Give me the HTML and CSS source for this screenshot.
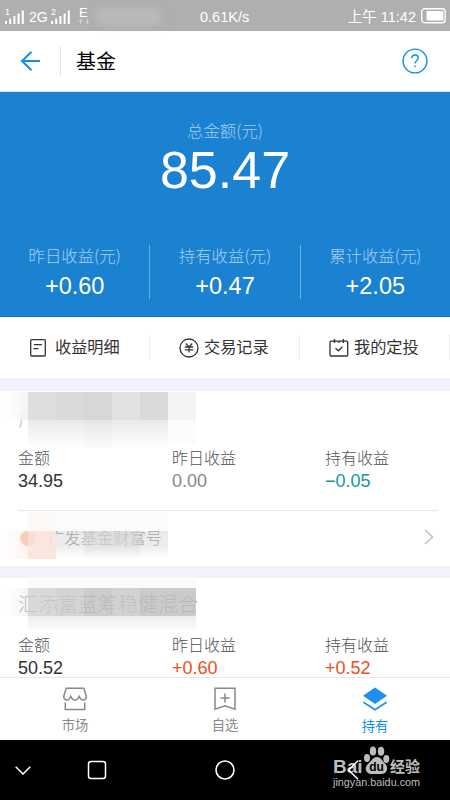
FILE: index.html
```html
<!DOCTYPE html>
<html lang="zh-CN">
<head>
    <meta charset="UTF-8">
    <meta name="viewport" content="width=device-width, initial-scale=1">
    <title>基金</title>
    <link rel="stylesheet" href="styles.css">
</head>
<body>
<div class="phone">
    <!-- 状态栏 -->
    <div class="status">
        <svg class="signal" width="20" height="18" viewBox="0 0 20 18" fill="#fff"><path d="M0 14h2v3H0zM4.200 11.500h2V17h-2zM8.400 9h2v8h-2zM12.600 6.500h2V17h-2zM16.800 3.500h2V17h-2z"/><text class="sim" x="0" y="8">1</text></svg>
        <span class="net">2G</span>
        <svg class="signal" width="20" height="18" viewBox="0 0 20 18" fill="#fff"><path d="M0 14h2v3H0zM4.200 11.500h2V17h-2zM8.400 9h2v8h-2zM12.600 6.500h2V17h-2zM16.800 3.500h2V17h-2z"/><text class="sim" x="0" y="8">2</text></svg>
        <span class="edge"><b>E</b><svg width="12" height="5" viewBox="0 0 12 5" fill="none" stroke="#d6d6d6"><path d="M2.500 5V1M.5 2.500l2-2 2 2M9.500 0v4M7.500 2.500l2 2 2-2"/></svg></span>
        <span class="smudge"></span>
        <span class="speed">0.61K/s</span>
        <span class="time">上午 11:42</span>
        <svg class="battery" width="25" height="16" viewBox="0 0 25 16"><rect x=".75" y=".75" width="23.500" height="14" rx="3" fill="none" stroke="#fff" stroke-width="1.300"/><rect x="5.500" y="3" width="17" height="9.500" rx="1" fill="#fff"/></svg>
    </div>

    <!-- 标题 -->
    <div class="header">
        <svg class="back" width="20" height="20" viewBox="0 0 20 20" fill="none" stroke="#108ee9" stroke-width="2"><path d="M11.500 .8L2 10l9.500 9.200M2 10h18"/></svg>
        <h1>基金</h1>
        <svg class="help" width="26" height="26" viewBox="0 0 26 26" fill="none" stroke="#108ee9" stroke-width="1.400"><circle cx="13" cy="13" r="11.900"/><path d="M9.800 10.200c0-2 1.400-3.200 3.200-3.200s3.200 1.200 3.200 3c0 2.300-3.200 2.600-3.200 5.500M13 17.500v1.800"/></svg>
    </div>

    <!-- 总金额 -->
    <div class="hero">
        <div class="label">总金额(元)</div>
        <div class="total">85.47</div>
        <div class="stats">
            <div class="stat"><div class="label">昨日收益(元)</div><div class="num">+0.60</div></div>
            <div class="stat"><div class="label">持有收益(元)</div><div class="num">+0.47</div></div>
            <div class="stat"><div class="label">累计收益(元)</div><div class="num">+2.05</div></div>
        </div>
    </div>

    <div class="actions">
        <div class="action first">
            <svg width="20" height="20" viewBox="0 0 20 20" fill="none" stroke="#333" stroke-width="1.300"><rect x="2.700" y="1.700" width="14.600" height="16.300" rx="1"/><path d="M6 6.700h8M5.500 10.700h5"/></svg>
            <span>收益明细</span>
        </div>
        <div class="action">
            <svg width="20" height="20" viewBox="0 0 20 20" fill="none" stroke="#333" stroke-width="1.300"><circle cx="10" cy="10" r="9"/><path d="M6.800 5.500L10 9l3.200-3.500M5.800 9h8.400M5.800 11.800h8.400M10 9v5.500"/></svg>
            <span>交易记录</span>
        </div>
        <div class="action">
            <svg width="20" height="20" viewBox="0 0 20 20" fill="none" stroke="#333" stroke-width="1.300"><rect x="1" y="3.200" width="17.700" height="14.800" rx="1"/><path d="M5.500 1v4M10 3v2M14.300 1v4M6.500 10.200l3 2.600 4-4"/></svg>
            <span>我的定投</span>
        </div>
    </div>

    <!-- 持有列表 -->
    <div class="list">
        <div class="card">
            <div class="name">
                <span>广</span>
                <svg class="mosaic" width="230" height="70" viewBox="0 0 230 70">
                    <defs>
                        <linearGradient id="fadeR"><stop offset="0" stop-color="#fff" stop-opacity=".3"/><stop offset="1" stop-color="#f3f3f3"/></linearGradient>
                        <linearGradient id="fadeB" x1="0" x2="0" y1="0" y2="1"><stop offset="0" stop-color="#e9e9e9"/><stop offset="1" stop-color="#fff"/></linearGradient>
                    </defs>
                    <rect x="0" y="1" width="28" height="28" fill="url(#fadeR)"/>
                    <rect x="28" y="1" width="28" height="28" fill="#dedede"/>
                    <rect x="56" y="1" width="28" height="28" fill="#dadada"/>
                    <rect x="84" y="1" width="28" height="28" fill="#d7d7d7"/>
                    <rect x="112" y="1" width="28" height="28" fill="#e2e2e2"/>
                    <rect x="140" y="1" width="28" height="28" fill="#dadada"/>
                    <rect x="168" y="1" width="28" height="28" fill="#f3f3f3"/>
                    <rect x="28" y="29" width="140" height="28" fill="url(#fadeB)"/>
                    <rect x="84" y="29" width="28" height="28" fill="#000" fill-opacity=".015"/>
                    <rect x="168" y="29" width="28" height="24" fill="#fbfbfb"/>
                </svg>
            </div>
            <div class="cols">
                <div><div class="k">金额</div><div class="v">34.95</div></div>
                <div><div class="k">昨日收益</div><div class="v zero">0.00</div></div>
                <div><div class="k">持有收益</div><div class="v down">−0.05</div></div>
            </div>
            <div class="shop">
                <i class="dot"></i>
                <span class="shopname">广发基金财富号</span>
                <svg class="mosaic" width="200" height="56" viewBox="0 0 200 56">
                    <defs>
                        <linearGradient id="pinkR"><stop offset="0" stop-color="#fff"/><stop offset="1" stop-color="#fbeee9"/></linearGradient>
                        <linearGradient id="grayB" x1="0" x2="0" y1="0" y2="1"><stop offset="0" stop-color="#d4d4d4" stop-opacity=".8"/><stop offset=".5" stop-color="#d9d9d9" stop-opacity=".8"/><stop offset="1" stop-color="#fff" stop-opacity=".8"/></linearGradient>
                    </defs>
                    <rect x="28" y="2" width="28" height="19" fill="#fdf8f5" fill-opacity=".8"/>
                    <rect x="56" y="2" width="112" height="19" fill="#fafafa" fill-opacity=".8"/>
                    <rect x="0" y="21" width="28" height="28" fill="url(#pinkR)" fill-opacity=".6"/>
                    <rect x="28" y="21" width="28" height="28" fill="#fae3dc" fill-opacity=".9"/>
                    <rect x="56" y="21" width="28" height="28" fill="url(#grayB)" fill-opacity=".6"/>
                    <rect x="84" y="21" width="56" height="28" fill="url(#grayB)"/>
                    <rect x="140" y="21" width="28" height="28" fill="url(#grayB)" fill-opacity=".6"/>
                </svg>
                <svg class="arrow" width="10" height="16" viewBox="0 0 10 16" fill="none" stroke="#c4c4c4" stroke-width="1.700"><path d="M1 1l7.500 7L1 15"/></svg>
            </div>
        </div>

        <div class="card">
            <div class="name second">
                <span>汇添富蓝筹稳健混合</span>
                <svg class="mosaic" width="230" height="62" viewBox="0 0 230 62">
                    <defs>
                        <linearGradient id="edgeR"><stop offset="0" stop-color="#fff" stop-opacity=".2"/><stop offset="1" stop-color="#ebebeb" stop-opacity=".6"/></linearGradient>
                        <linearGradient id="softB" x1="0" x2="0" y1="0" y2="1"><stop offset="0" stop-color="#ededed"/><stop offset="1" stop-color="#fff"/></linearGradient>
                    </defs>
                    <rect x="28" y="1" width="168" height="9" fill="#fbfbfb"/>
                    <rect x="0" y="10" width="28" height="28" fill="url(#edgeR)"/>
                    <g fill-opacity=".85">
                        <rect x="28" y="10" width="28" height="28" fill="#d2d2d2"/>
                        <rect x="56" y="10" width="28" height="28" fill="#cccccc"/>
                        <rect x="84" y="10" width="28" height="28" fill="#c3c3c3"/>
                        <rect x="112" y="10" width="28" height="28" fill="#cacaca"/>
                        <rect x="140" y="10" width="56" height="28" fill="#c2c2c2"/>
                    </g>
                    <rect x="28" y="38" width="168" height="18" fill="url(#softB)"/>
                </svg>
            </div>
            <div class="cols">
                <div><div class="k">金额</div><div class="v">50.52</div></div>
                <div><div class="k">昨日收益</div><div class="v up">+0.60</div></div>
                <div><div class="k">持有收益</div><div class="v up">+0.52</div></div>
            </div>
        </div>
    </div>

    <!-- 底部标签 -->
    <div class="tabs">
        <div class="tab">
            <svg width="26" height="24" viewBox="0 0 26 24" fill="none" stroke="#888" stroke-width="1.500"><path d="M4.200 1.200h17.600L24.200 9c.3 2-1 4-3 4-1.800 0-3-1.200-4-3.500-1 2.300-2.200 3.500-4.200 3.500S9.800 11.800 8.800 9.500c-1 2.300-2.200 3.500-4 3.500-2 0-3.300-2-3-4zM3.300 15.500v7h19.400v-7"/></svg>
            <span>市场</span>
        </div>
        <div class="tab">
            <svg width="26" height="24" viewBox="0 0 26 24" fill="none" stroke="#888" stroke-width="1.500"><path d="M3 1.200h20v21l-10-3.400-10 3.400zM13 6.500v9M8.500 11h9"/></svg>
            <span>自选</span>
        </div>
        <div class="tab on">
            <svg width="26" height="24" viewBox="0 0 26 24"><path d="M13 .5l12 8.300L13 17 1 8.800z" fill="#1b90ee"/><path d="M1.500 15.200L13 22.800l11.500-7.600" fill="none" stroke="#1b90ee" stroke-width="1.700"/></svg>
            <span>持有</span>
        </div>
    </div>

    <!-- 系统导航键 -->
    <div class="nav">
        <svg class="down-key" width="16" height="9" viewBox="0 0 16 9" fill="none" stroke="#fff" stroke-width="1.500"><path d="M.7.7L8 8 15.300.7"/></svg>
        <svg class="recent-key" width="20" height="20" viewBox="0 0 20 20" fill="none" stroke="#fff" stroke-width="1.500"><rect x="1.500" y="1.500" width="17" height="17" rx="2.500"/></svg>
        <svg class="home-key" width="20" height="20" viewBox="0 0 20 20" fill="none" stroke="#fff" stroke-width="1.600"><circle cx="10" cy="10" r="9"/></svg>
        <div class="mark">
            <div class="brand">
                <span class="bai">Bai</span>
                <svg width="27" height="29" viewBox="0 0 27 29" fill="#bdbdbd"><ellipse cx="4" cy="12" rx="3" ry="4"/><ellipse cx="10" cy="5" rx="3.200" ry="4.500"/><ellipse cx="18" cy="5.300" rx="3.200" ry="4.500"/><ellipse cx="23.300" cy="13" rx="3" ry="4"/><path d="M14 11c3.500 0 5 3.500 7.500 6 2.300 2.300 3 4.500 2.500 6.500-.6 3-3 4.500-6 4.500H9c-3.500 0-6-2-6.300-5-.2-2.500 1.300-4 3.300-6 2.500-2.500 4.500-6 8-6z"/><text class="du" x="13.500" y="25" text-anchor="middle">du</text></svg>
                <span class="jy">经验</span>
            </div>
            <div class="url">jingyan.baidu.com</div>
        </div>
        <svg class="back-key" width="12" height="20" viewBox="0 0 12 20" fill="none" stroke="#fff" stroke-width="1.500"><path d="M11 .8L1.500 10 11 19.200"/></svg>
    </div>
</div>
</body>
</html>
```

FILE: styles.css
```css
*{
    margin: 0;
    padding: 0;
    box-sizing: border-box;
}
body {
    font-family: "Liberation Sans", "Noto Sans CJK SC", sans-serif;
    color: #333;
    background: #fff;
}
svg {
    display: block;
    flex: none;
}
.phone {
    width: 450px;
    height: 800px;
    overflow: hidden;
    display: flex;
    flex-direction: column;
}

/* 状态栏 */
.status {
    height: 31px;
    flex: none;
    display: flex;
    align-items: center;
    padding: 2px 4px 0 5px;
    background: #afafaf;
    color: #fff;
    font-size: 14.5px;
    white-space: nowrap;
}
.signal {
    margin-top: -1px;
}
.sim {
    font-size: 9px;
}
.net {
    width: 26px;
    padding-left: 4px;
    font-size: 14px;
}
.edge {
    width: 12px;
    margin: -3px 0 0 7px;
}
.edge b {
    display: block;
    font-size: 13px;
    font-weight: normal;
    line-height: 13px;
    padding-left: 1px;
}
.smudge {
    width: 66px;
    height: 18px;
    margin-left: 6px;
    border-radius: 8px;
    background: #b9b9b9;
    filter: blur(3px);
}
.speed {
    width: 51px;
    margin-left: 38px;
}
.time {
    margin-left: auto;
    line-height: 20px;
}
.battery {
    margin: -1px 0 0 5px;
}

/* 标题 */
.header {
    height: 61px;
    flex: none;
    display: flex;
    align-items: center;
    padding: 0 22px 0 20px;
    border-bottom: 1px solid #ddd;
}
.header h1 {
    height: 30px;
    line-height: 32px;
    margin-left: 20px;
    padding-left: 15px;
    border-left: 1px solid #e2e2e2;
    font-size: 20px;
    font-weight: normal;
    color: #000;
}
.help {
    margin-left: auto;
}

/* 总金额 */
.hero {
    height: 225px;
    flex: none;
    padding-top: 27px;
    background: #1b82d2;
    border-bottom: 1px solid #0f74cb;
    text-align: center;
    color: #fff;
}
.hero .label {
    font-family: "Noto Sans CJK SC", sans-serif;
    font-size: 16.4px;
    line-height: 22px;
    font-weight: 300;
    color: #a4cff2;
}
.total {
    height: 60px;
    line-height: 60px;
    font-size: 52px;
    margin-top: -1px;
}
.stats {
    display: flex;
    margin-top: 45px;
}
.stat {
    flex: 1;
    height: 54px;
}
.stat + .stat {
    border-left: 1px solid #66aee3;
}
.stat .label {
    margin-top: -1px;
}
.num {
    font-size: 23.5px;
    line-height: 28px;
    margin-top: 6px;
}

/* 快捷入口 */
.actions {
    height: 61px;
    flex: none;
    display: grid;
    grid-template-columns: 150px 150px 150px;
    align-items: center;
}
.action {
    height: 25px;
    display: flex;
    align-items: center;
    gap: 5px;
    padding-left: 29px;
    border-right: 1px solid #eee;
    font-size: 16.2px;
    line-height: 25px;
}
.first {
    gap: 7px;
    padding-left: 28px;
}

/* 持有列表 */
.list {
    flex: 1;
    overflow: hidden;
    background: #f3f2f8;
    padding-top: 13px;
}
.card {
    background: #fff;
    margin-bottom: 12px;
}
.name {
    position: relative;
    height: 57px;
    padding: 14px 18px 0;
    font-size: 20px;
    line-height: 28px;
    color: #bbb;
    font-weight: 300;
}
.second {
    padding-top: 13px;
    color: #888;
}
.mosaic {
    position: absolute;
    top: 0;
    left: 0;
}
.cols {
    display: grid;
    grid-template-columns: 154px 153px 1fr;
    padding-left: 18px;
    height: 62px;
}
.k {
    font-size: 16px;
    line-height: 22px;
    font-weight: 300;
    color: #555;
}
.v {
    font-size: 18px;
    line-height: 22px;
}
.zero {
    color: #888;
}
.down {
    color: #119b92;
}
.up {
    color: #e9501f;
}
.shop {
    position: relative;
    height: 56px;
    display: flex;
    align-items: center;
    padding: 0 16px 0 20px;
}
.shop::before {
    content: "";
    position: absolute;
    top: 0;
    left: 18px;
    right: 12px;
    height: 1px;
    background: #e8e8e8;
}
.dot {
    width: 15px;
    height: 15px;
    border-radius: 50%;
    background: #ef9a74;
}
.shopname {
    margin: -3px 0 0 13px;
    font-size: 16.3px;
    font-weight: 300;
    color: #777;
}
.arrow {
    margin: -2px 0 0 auto;
}

/* 底部标签 */
.tabs {
    height: 63px;
    flex: none;
    display: flex;
    background: #fff;
    border-top: 1px solid #e6e6e6;
}
.tab {
    flex: 1;
    display: flex;
    flex-direction: column;
    align-items: center;
    padding-top: 9px;
    font-size: 13.3px;
    line-height: 18px;
    color: #888;
}
.tab span {
    margin-top: 6px;
}
.on {
    color: #108ee9;
}
.tab.on span {
    margin-top: 7px;
}

/* 系统导航键 */
.nav {
    position: relative;
    height: 60px;
    flex: none;
    display: flex;
    align-items: center;
    padding-left: 15px;
    background: #000;
}
.recent-key {
    margin-left: 56px;
}
.home-key {
    margin-left: 108px;
}
.back-key {
    position: relative;
    margin-left: 112px;
}
.mark {
    position: absolute;
    top: 6px;
    left: 333px;
    color: #bdbdbd;
}
.brand {
    display: flex;
    align-items: flex-end;
    height: 29px;
}
.bai {
    width: 30px;
    font-size: 19px;
    font-weight: bold;
    line-height: 17px;
}
.du {
    font-size: 12px;
    font-weight: bold;
    fill: #000;
}
.jy {
    font-size: 15px;
    font-weight: bold;
    line-height: 17px;
    white-space: nowrap;
}
.url {
    font-family: "Liberation Sans", sans-serif;
    font-size: 10.8px;
    line-height: 15px;
}
```
